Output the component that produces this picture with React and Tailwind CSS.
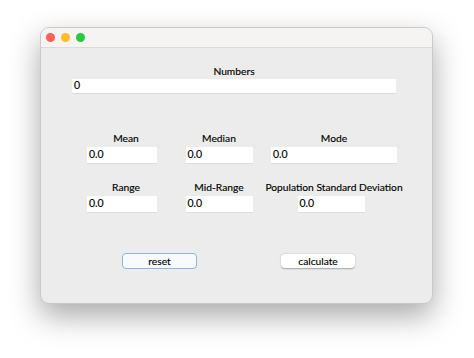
const font = { fontFamily: 'Lato, "Open Sans", "Liberation Sans", sans-serif' };

function Field({ value, className = '' }) {
  return (
    <div
      className={`flex items-center bg-white pl-[2px] text-[10.5px] text-black shadow-[0_1px_0_#dcdcdc] [-webkit-text-stroke:0.15px_#000] ${className}`}
    >
      {value}
    </div>
  );
}

function Label({ children }) {
  return (
    <div className="h-[14px] whitespace-nowrap text-[10.25px] leading-[14px] text-black [-webkit-text-stroke:0.15px_#000]">
      {children}
    </div>
  );
}

function Stat({ label, width, value = '0.0', fieldClass = '' }) {
  return (
    <div className="flex flex-col items-center">
      <Label>{label}</Label>
      <Field value={value} className={`mt-[2px] h-[16px] ${width} ${fieldClass}`} />
    </div>
  );
}

export default function App() {
  return (
    <div className="min-h-[358px] w-[474px] bg-white pl-[40px] pt-[27px]" style={font}>
      <div className="flex h-[277px] w-[393px] flex-col overflow-hidden rounded-[9px] border border-[#c9c9c9] bg-[#ececec] shadow-[0_12px_30px_rgba(0,0,0,0.34)]">
        <div className="flex h-[20px] shrink-0 items-center gap-[6px] border-b border-[#dadada] bg-[#f5f4f2] pl-[5px]">
          <span className="h-[9px] w-[9px] rounded-full bg-[#fe5f57]" />
          <span className="h-[9px] w-[9px] rounded-full bg-[#febc2e]" />
          <span className="h-[9px] w-[9px] rounded-full bg-[#28c840]" />
        </div>

        <div className="flex flex-col items-center pr-[5px] pt-[16px]">
          <Label>Numbers</Label>
          <Field value="0" className="mt-[1px] h-[14px] w-[324px]" />
        </div>

        <div className="mt-[38px] flex">
          <div className="flex w-[132px] justify-end">
            <div className="w-[94px]">
              <Stat label="Mean" width="w-[70px]" fieldClass="mr-[8px]" />
            </div>
          </div>
          <div className="flex w-[92px] justify-center">
            <Stat label="Median" width="w-[67px]" />
          </div>
          <div className="ml-[2px] flex w-[134px] justify-center">
            <Stat label="Mode" width="w-[126px]" />
          </div>
        </div>

        <div className="mt-[17px] flex">
          <div className="flex w-[132px] justify-end">
            <div className="w-[94px]">
              <Stat label="Range" width="w-[70px]" fieldClass="mr-[8px]" />
            </div>
          </div>
          <div className="flex w-[92px] justify-center">
            <Stat label="Mid-Range" width="w-[67px]" />
          </div>
          <div className="ml-[2px] flex w-[134px] justify-center">
            <Stat label="Population Standard Deviation" width="w-[67px]" fieldClass="mr-[6px]" />
          </div>
        </div>

        <div className="mt-[41px] flex">
          <button
            type="button"
            className="ml-[81px] h-[16px] w-[75px] rounded-[4px] border border-[#94b3d8] bg-[#f7faff] text-[10.25px] leading-[14px] text-black [-webkit-text-stroke:0.15px_#000]"
          >
            reset
          </button>
          <button
            type="button"
            className="ml-[84px] mt-[1px] h-[14px] w-[74px] rounded-[4px] bg-white text-[10.25px] leading-[14px] text-black shadow-[0_0.5px_1.5px_rgba(0,0,0,0.3)] [-webkit-text-stroke:0.15px_#000]"
          >
            calculate
          </button>
        </div>
      </div>
    </div>
  );
}
